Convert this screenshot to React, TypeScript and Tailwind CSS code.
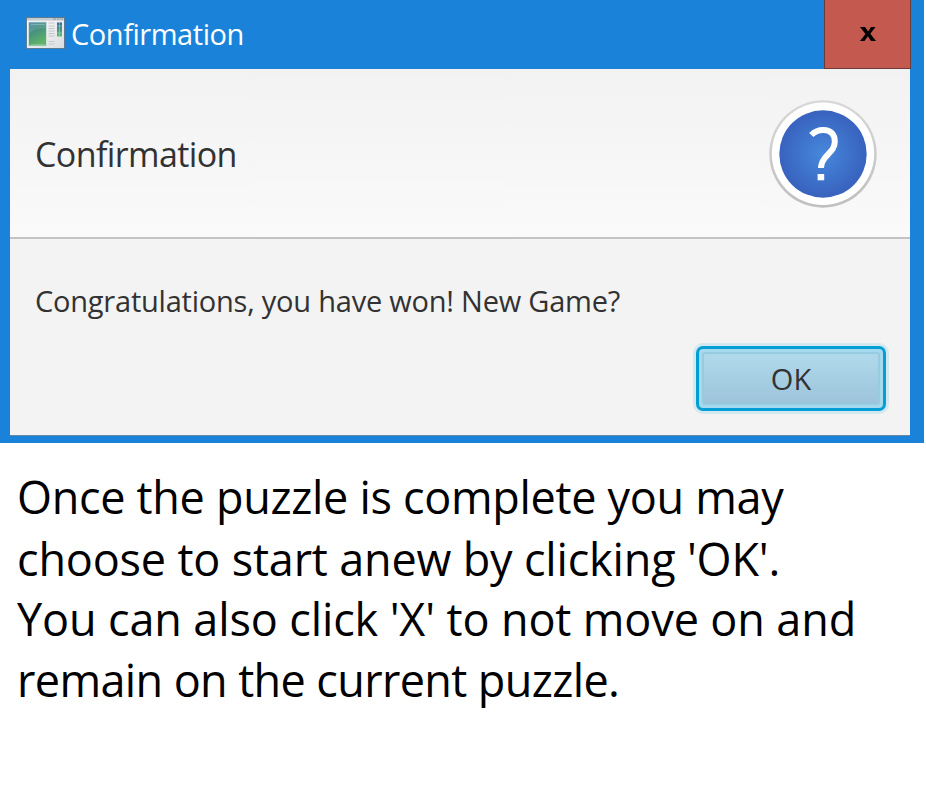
import React from "react";

function WindowIcon() {
  return (
    <svg width="39" height="33" viewBox="0 0 39 33" className="block shrink-0">
      <defs>
        <linearGradient id="paneFill" x1="0" y1="0" x2="0.4" y2="1">
          <stop offset="0" stopColor="#4a83a4" />
          <stop offset="0.45" stopColor="#46917f" />
          <stop offset="1" stopColor="#5fb566" />
        </linearGradient>
        <linearGradient id="stripFill" x1="0" y1="0" x2="0" y2="1">
          <stop offset="0" stopColor="#2f6c9c" />
          <stop offset="1" stopColor="#62bb6a" />
        </linearGradient>
        <linearGradient id="frameFill" x1="0" y1="0" x2="1" y2="1">
          <stop offset="0" stopColor="#ffffff" />
          <stop offset="1" stopColor="#d9dcdf" />
        </linearGradient>
      </defs>
      <rect x="0.5" y="0.5" width="38" height="31" fill="url(#frameFill)" stroke="#5d7c93" />
      <rect x="1" y="1" width="37" height="2.6" fill="#c5cbd0" />
      <path d="M27 2h3M31 2h2.500M34.500 2h2.500" stroke="#8e969d" strokeWidth="1" />
      <rect x="2.500" y="5" width="18" height="24" fill="url(#paneFill)" stroke="#d5e3e3" strokeWidth="0.8" />
      <path d="M3 17Q8 11 20 11V5.500H3z" fill="#ffffff" opacity="0.1" />
      <path d="M5 7.500h14M5 27.500h14" stroke="#a5cfc7" strokeWidth="0.7" opacity="0.7" />
      <path d="M22.500 6h6M22.500 9h6M22.500 11.500h6M22.500 14h6M22.500 16.500h6M22.500 19h6M22.500 24.500h6M22.500 27h6" stroke="#c4c8cb" strokeWidth="1.2" />
      <rect x="31" y="5.500" width="5" height="14" fill="url(#stripFill)" />
      <path d="M33.500 6v13M31 9h5M31 16h5" stroke="#9bcdd0" strokeWidth="0.6" />
    </svg>
  );
}

function QuestionIcon() {
  return (
    <svg width="108" height="108" viewBox="0 0 108 108" className="block">
      <defs>
        <radialGradient id="disc">
          <stop offset="0" stopColor="#4688dc" />
          <stop offset="1" stopColor="#3862be" />
        </radialGradient>
        <linearGradient id="ring" x1="0" y1="0" x2="0" y2="1">
          <stop offset="0" stopColor="#d8d8d8" />
          <stop offset="1" stopColor="#bfbfbf" />
        </linearGradient>
      </defs>
      <circle cx="54" cy="54" r="53.700" fill="url(#ring)" />
      <circle cx="54" cy="53.700" r="51.200" fill="#fff" />
      <circle cx="54" cy="54" r="43.700" fill="url(#disc)" />
      <path
        d="M42.300 35C45.800 31.500 49.300 30 54.300 30C61.800 30 65.800 34.300 65.800 41.500C65.800 47.500 62.800 50.500 58.600 54.800C53.800 59.500 52 62.500 52 68"
        fill="none"
        stroke="#fff"
        strokeWidth="6"
      />
      <rect x="48.600" y="74" width="6.600" height="6.300" fill="#fff" />
    </svg>
  );
}

export default function App() {
  return (
    <div className="h-[800px] w-[926px] overflow-hidden bg-white font-['Open_Sans','Noto_Sans',sans-serif] whitespace-nowrap">
      <section className="flex h-[443px] w-[924px] flex-col bg-[#1a83d9]">
        <header className="flex h-[69px] shrink-0 justify-between pl-[26px]">
          <div className="flex pt-[17px]">
            <WindowIcon />
            <h1 className="-mt-[4px] ml-[6px] text-[29px] leading-[42px] tracking-[-0.45px] text-white">Confirmation</h1>
          </div>
          <button aria-label="Close" className="mr-[13px] flex h-[69px] w-[87px] items-center justify-center border border-t-0 border-[#6b3b3b] bg-[#c3594f]">
            <svg width="16" height="14" viewBox="0 0 16 14" className="-mt-px block">
              <path d="M0 0H5L8.200 4.500L11 0H15.500L10.300 6.800L16 14H11L7.800 9.200L4.500 14H0L5.500 6.900Z" fill="#000" />
            </svg>
          </button>
        </header>
        <div className="ml-[10px] flex h-[367px] w-[900px] flex-col border-b border-[#6688a3] bg-[#f3f3f3]">
          <div className="flex h-[170px] shrink-0 items-start justify-between border-b-2 border-[#c3c3c3] bg-linear-to-b from-[#f2f2f2] to-[#fafafa] pr-[33px] pl-[25px]">
            <h2 className="pt-[60px] text-[34px] leading-[50px] tracking-[-0.6px] text-[#323232]">Confirmation</h2>
            <div className="pt-[31px]"><QuestionIcon /></div>
          </div>
          <p className="mt-[42px] ml-[25px] text-[29px] leading-[40px] tracking-[-0.22px] text-[#323232]">Congratulations, you have won! New Game?</p>
          <div className="mt-[22px] mr-[21px] flex justify-end">
            <div className="rounded-[10px] bg-[#d3e8ef] p-[3px]">
              <button className="block h-[65px] w-[190px] rounded-[7px] border-3 border-[#039ed3] bg-[#a5d9ee] p-[3px]">
                <span className="block h-full rounded-[3px] border-2 border-[#98cae2] bg-linear-to-b from-[#b0daec] to-[#9dc4da] text-center text-[29px] leading-[50px] text-[#323232]">OK</span>
              </button>
            </div>
          </div>
        </div>
      </section>
      <div className="pt-[23px] pl-[17px] text-[45px] leading-[61px] text-black">
        <p className="h-[62px] tracking-[-0.31px]">Once the puzzle is complete you may</p>
        <p className="h-[60px] tracking-[-0.18px]">choose to start anew by clicking 'OK'.</p>
        <p className="h-[61px] tracking-[-0.13px]">You can also click 'X' to not move on and</p>
        <p className="h-[61px] tracking-[-0.62px]">remain on the current puzzle.</p>
      </div>
    </div>
  );
}
